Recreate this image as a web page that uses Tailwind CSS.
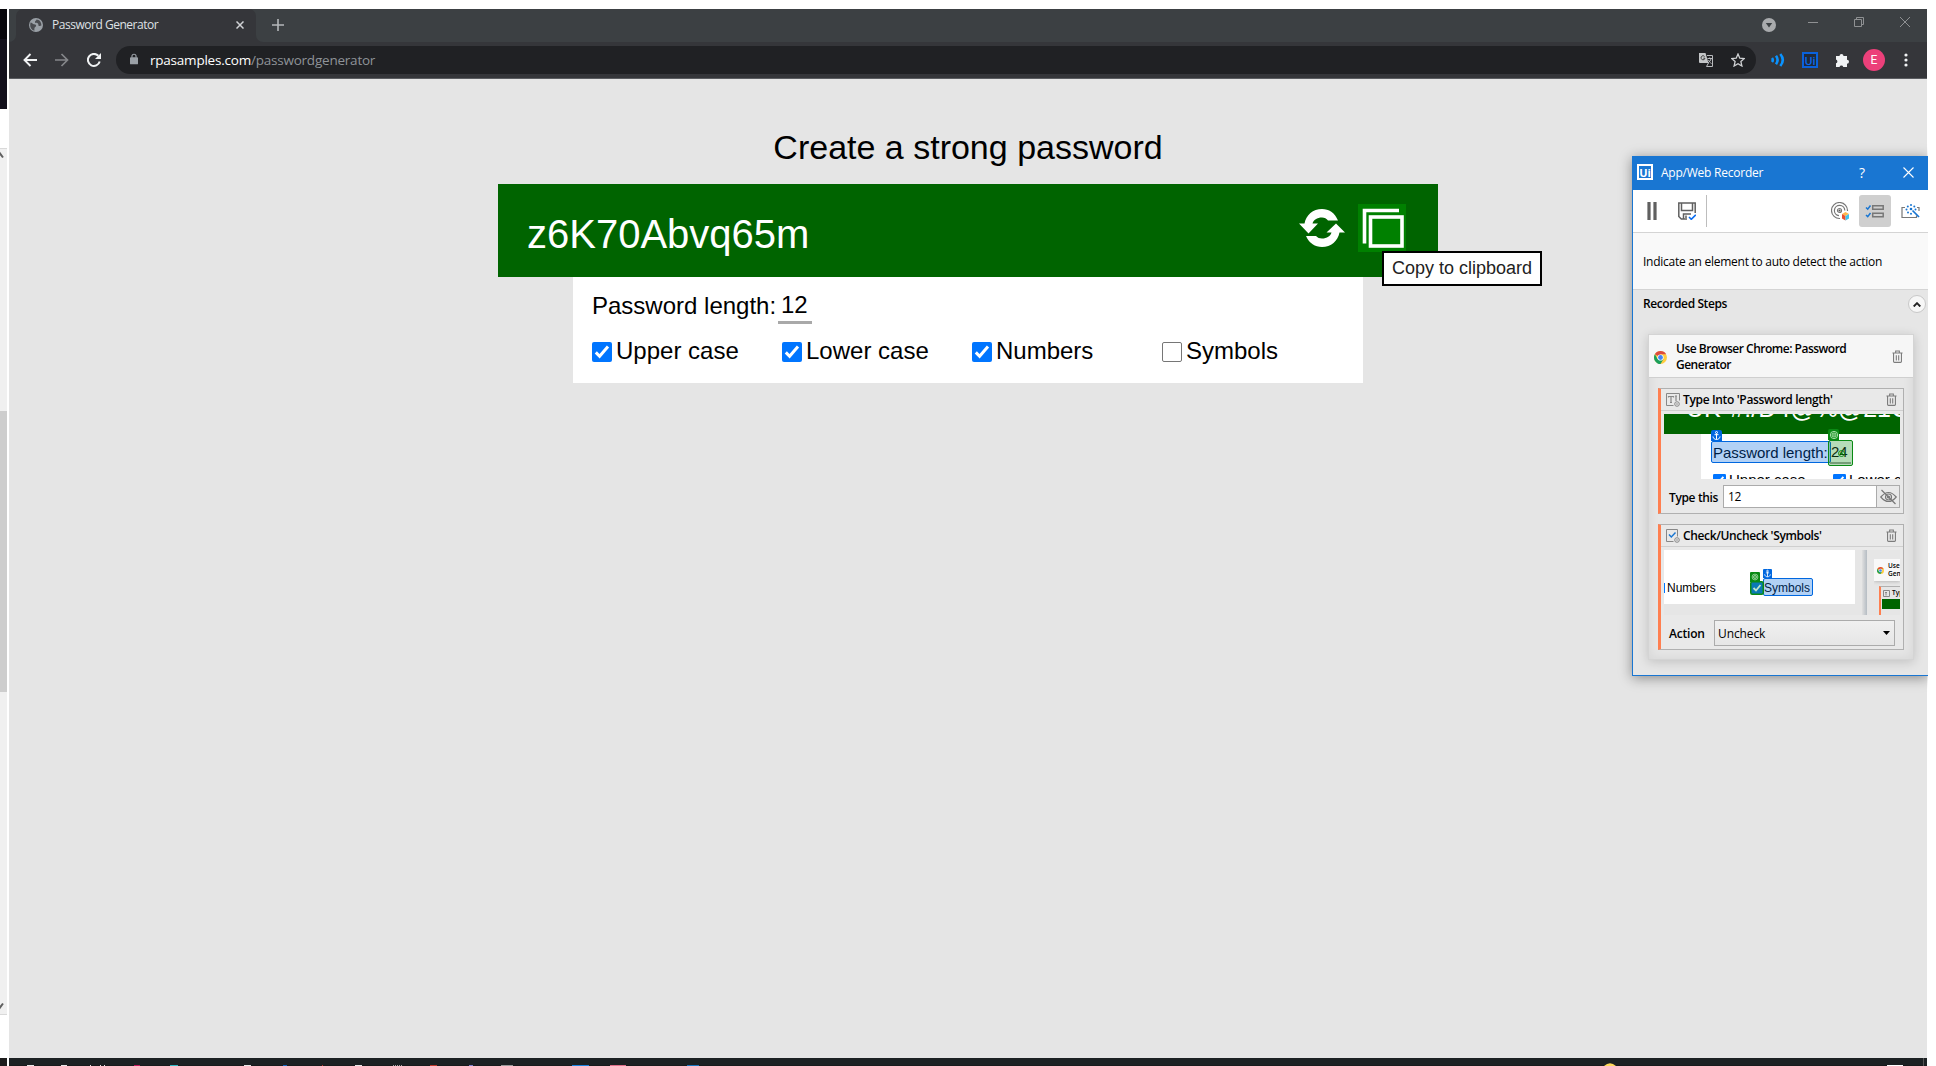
<!DOCTYPE html>
<html lang="en">
<head>
<meta charset="utf-8">
<title>Password Generator</title>
<script src="https://cdn.jsdelivr.net/npm/@tailwindcss/browser@4"></script>
</head>
<body class="relative flex h-[1066px] w-[1936px] flex-col overflow-hidden bg-white pt-[9px] font-['Open_Sans',sans-serif]">

<svg class="hidden">
  <symbol id="trash" viewBox="0 0 12 14"><g fill="none" stroke="#7c7c7c" stroke-width="1.2"><path d="M.5 3.2h11M4 3V1h4v2M1.7 3.2v9.2a1 1 0 0 0 1 1h6.6a1 1 0 0 0 1-1V3.2M4.7 5.5v5.8M7.3 5.5v5.8"/></g></symbol>
  <symbol id="check" viewBox="0 0 20 20"><rect width="20" height="20" rx="2" fill="#0075ff"/><path d="M3.8 10.4 7.6 14.2 16 4.4" fill="none" stroke="#fff" stroke-width="3"/></symbol>
  <symbol id="chrome" viewBox="0 0 20 20"><circle cx="10" cy="10" r="10" fill="#ffcd40"/><path d="M10 10 1.34 5A10 10 0 0 1 18.66 5H10Z" fill="#dd4b3e"/><path d="M1.34 5A10 10 0 0 0 10 20l4.4-7.5L10 10 5.7 12.5Z" fill="#1a9f5a"/><circle cx="10" cy="10" r="4.8" fill="#fff"/><circle cx="10" cy="10" r="3.7" fill="#4285f4"/></symbol>
  <symbol id="anchor" viewBox="0 0 11 11"><g fill="none" stroke="#fff" stroke-width="1"><circle cx="5.5" cy="2.5" r="1"/><path d="M5.5 3.5v6M3.5 4.7h4M2 6.5c.3 2 1.700 3 3.500 3s3.200-1 3.500-3"/></g></symbol>
  <symbol id="target" viewBox="0 0 11 11"><g fill="none" stroke="#c9f0c9" stroke-width=".9"><circle cx="5.500" cy="5.500" r="4"/><circle cx="5.500" cy="5.500" r="2.200"/><circle cx="5.500" cy="5.500" r=".5"/></g></symbol>
</svg>

<div class="flex h-[1049px] gap-[2px]">
  <!-- window behind -->
  <div class="flex w-[7px] flex-col overflow-hidden">
    <div class="h-[30px] bg-[#07060b]"></div>
    <div class="h-[70px] bg-[#12101b]"></div>
    <div class="h-[39px] bg-white"></div>
    <div class="h-[263px] border-t border-[#d9d9d9] bg-[#f0f0f0]"><svg class="mt-[2px] h-[8px] w-[7px]" viewBox="0 0 7 8"><path d="M-3 6.500 0 2.500 3 6.500" fill="none" stroke="#606060" stroke-width="2"/></svg></div>
    <div class="h-[281px] bg-[#cdcdcd]"></div>
    <div class="flex h-[323px] flex-col justify-end border-b border-[#d9d9d9] bg-[#f0f0f0] pb-[4px]"><svg class="h-[8px] w-[7px]" viewBox="0 0 7 8"><path d="M-3 1.500 0 5.500 3 1.500" fill="none" stroke="#606060" stroke-width="2"/></svg></div>
  </div>

  <!-- browser -->
  <div class="flex w-[1918px] flex-col bg-[#e5e5e5]">
    <div class="flex h-[33px] bg-[#3c4043]">
      <div class="w-[7px] bg-[#35363a]"><div class="h-full rounded-br-[7px] bg-[#3c4043]"></div></div>
      <div class="flex w-[240px] items-center rounded-t-[7px] bg-[#35363a] pl-[13px] pr-[12px]">
        <svg class="mt-[-1px] size-[14px]" viewBox="0 0 14 14"><circle cx="7" cy="7" r="7" fill="#9aa0a6"/><path d="M1.500 4.500c1.500 0 2 1.500 3.500 1.800 1.500.2 2.500.7 2 2-.5 1-1.600 1-1.600 2.500v2C2.600 12 1 9.500 1.200 7ZM7.500 1.500c0 1.500-1.700 1.200-1.500 2.500.3 1.300 2 .5 3 1.500.8 1-.2 2 1 2.500.9.300 1.500 0 2.400-.4C12.500 4 10.500 1.800 7.500 1.500Z" fill="#4a4c50"/></svg>
        <span class="ml-[9px] mt-[-1px] flex-1 whitespace-nowrap text-[12px] tracking-[-0.48px] text-[#dfe1e5]">Password Generator</span>
        <svg class="mt-[-1px] size-[8px]" viewBox="0 0 8 8"><path d="m.5.5 7 7m0-7-7 7" stroke="#d0d2d5" stroke-width="1.500"/></svg>
      </div>
      <div class="w-[7px] bg-[#35363a]"><div class="h-full rounded-bl-[7px] bg-[#3c4043]"></div></div>
      <svg class="ml-[9px] mt-[10px] size-[12px]" viewBox="0 0 12 12"><path d="M6 0v12M0 6h12" stroke="#b4b7ba" stroke-width="1.600"/></svg>
      <div class="flex-1"></div>
      <svg class="mt-[9px] size-[14px]" viewBox="0 0 14 14"><circle cx="7" cy="7" r="7" fill="#a9abad"/><path d="M3.800 5h6.400L7 9.600Z" fill="#3c4043"/></svg>
      <svg class="ml-[32px] mt-[8px] size-[10px]" viewBox="0 0 10 10"><path d="M0 5.500h10" stroke="#8f9193"/></svg>
      <svg class="ml-[36px] mt-[8px] size-[10px]" viewBox="0 0 10 10"><path d="M.5 2.500h7v7h-7ZM2.500 2.500v-2h7v7h-2" fill="none" stroke="#8f9193"/></svg>
      <svg class="ml-[36px] mr-[17px] mt-[8px] size-[10px]" viewBox="0 0 10 10"><path d="m0 0 10 10M10 0 0 10" stroke="#8f9193"/></svg>
    </div>

    <div class="flex h-[37px] items-center border-b border-[#5b5d61] bg-[#35363a]">
      <svg class="ml-[14px] size-[14px]" viewBox="0 0 14 14"><path d="M14 7H1.500M7.500 1 1.500 7l6 6" fill="none" stroke="#f1f3f4" stroke-width="1.900"/></svg>
      <svg class="ml-[18px] size-[14px]" viewBox="0 0 14 14"><path d="M0 7h12.500M6.500 1l6 6-6 6" fill="none" stroke="#85878a" stroke-width="1.700"/></svg>
      <svg class="ml-[18px] size-[14px]" viewBox="0 0 14 14"><path d="M12.700 8.500A6 6 0 1 1 11.300 2.800" fill="none" stroke="#f1f3f4" stroke-width="2"/><path d="M14 0v6H8Z" fill="#f1f3f4"/></svg>
      <div class="ml-[15px] flex h-[28px] w-[1640px] items-center rounded-full bg-[#202124] pl-[14px] pr-[11px]">
        <svg class="mt-[-2px] h-[12px] w-[8px]" viewBox="0 0 9 12"><rect y="4" width="9" height="8" rx="1" fill="#9aa0a6"/><path d="M2.200 4.500V3a2.300 2.300 0 0 1 4.600 0v1.500" fill="none" stroke="#9aa0a6" stroke-width="1.300"/></svg>
        <span class="ml-[12px] flex-1 whitespace-nowrap text-[13.500px] tracking-[-0.22px] text-[#8f9398]"><span class="text-white">rpasamples.com</span>/passwordgenerator</span>
        <svg class="size-[14px]" viewBox="0 0 14 14"><path d="M0 0h6.500l3 10H1a1 1 0 0 1-1-1Z" fill="#c4c6c8"/><path d="M5.600 3.500A2 2 0 1 0 6 5.200H4.300" fill="none" stroke="#333" stroke-width=".9"/><path d="M8 2.500h5.500v11H7.500L9.500 10M8.500 5.500H13M10.700 4.500v1M12 5.500c-.3 2-1.500 3.500-3 4.500M9.500 7c.6 1.500 1.500 2.500 3 3.500" fill="none" stroke="#b9bbbe" stroke-width="1"/></svg>
        <svg class="ml-[18px] size-[14px]" viewBox="0 0 14 14"><path d="m7 1 1.800 4.200 4.500.4-3.400 3 1 4.400L7 10.700 3.100 13l1-4.400-3.400-3 4.500-.4Z" fill="none" stroke="#d0d2d4" stroke-width="1.300"/></svg>
      </div>
      <svg class="ml-[15px] size-[14px]" viewBox="0 0 14 14"><g fill="none" stroke="#0a93ff" stroke-width="2.600"><path d="M1 5q1.600 2 0 4M5 2.800q3.200 4.200 0 8.400M9.300 1q5 6 0 12"/></g></svg>
      <div class="ml-[17px] flex size-[16px] items-center justify-center border-2 border-[#0a62dc] bg-[#202a3a] text-[11px] font-semibold leading-none text-[#0a6cf0]">Ui</div>
      <svg class="ml-[16px] size-[16px]" viewBox="0 0 16 16"><path d="M2 4h3.500a2 2 0 1 1 4 0H13v3.700a2 2 0 1 1 0 4V15H9.300a2 2 0 0 0-3.800 0H2v-3.700a2 2 0 0 0 0-3.800Z" fill="#f1f3f4"/></svg>
      <div class="ml-[13px] flex size-[22px] items-center justify-center rounded-full bg-[#ec407a] font-[Roboto] text-[12px] text-white">E</div>
      <svg class="ml-[19px] h-[14px] w-[4px]" viewBox="0 0 4 14"><g fill="#f1f3f4"><circle cx="2" cy="2" r="1.600"/><circle cx="2" cy="7" r="1.600"/><circle cx="2" cy="12" r="1.600"/></g></svg>
    </div>

    <!-- page -->
    <main class="flex flex-1 flex-col items-center font-['Liberation_Sans',Arial,sans-serif] text-black">
      <h1 class="mt-[49px] h-[56px] text-[34px] leading-[39px]">Create a strong password</h1>
      <div class="flex h-[93px] w-[940px] bg-[#006400] pl-[29px] pr-[32px]">
        <span class="mt-[27px] flex-1 text-[40px] leading-[46px] text-white">z6K70Abvq65m</span>
        <svg class="mt-[25px] h-[38px] w-[46px]" viewBox="0 0 46 38"><g fill="#fff"><path d="M0 14.500h5.500C7 6 14 0 23 0c7 0 12.500 3.500 16 11.500H29c-1.500-2-3.500-3-6-3-5 0-8.500 2.500-9.500 6H19L9.500 24.500Z"/><path d="M46 23.500h-5.500C39 32 32 38 23 38 16 38 10.500 34.500 7 27h10c1.500 1.700 3.500 2.500 6 2.500 5 0 8.500-2.500 9.500-6H27.500L37 14.500Z"/></g></svg>
        <div class="relative ml-[13px] mt-[20px] size-[48px] bg-[#008000]">
          <svg class="size-[48px]" viewBox="0 0 48 48"><path d="M6.500 39.500v-33H41" fill="none" stroke="#fff" stroke-width="3.600"/><rect x="12.500" y="13" width="31.500" height="29" fill="none" stroke="#fff" stroke-width="3.600"/></svg>
          <div class="absolute left-[24px] top-[47px] flex h-[35px] w-[160px] items-center justify-center whitespace-nowrap border-2 border-black bg-white pb-[1px] text-[18px] text-[#222]">Copy to clipboard</div>
        </div>
      </div>
      <div class="flex h-[106px] w-[790px] flex-col bg-white pl-[19px]">
        <div class="flex h-[47px] pt-[14px] text-[24px] leading-[27px]">
          <span class="w-[186px] pt-[1px]">Password length:</span>
          <div class="h-[33px] w-[34px] border-b-[3px] border-[#a9a9a9] pl-[3px]">12</div>
        </div>
        <div class="grid grid-cols-[190px_190px_190px_190px] pt-[13px] text-[24px] leading-[27px]">
          <label class="flex gap-[4px]"><svg class="mt-[5px] size-[20px]"><use href="#check"/></svg>Upper case</label>
          <label class="flex gap-[4px]"><svg class="mt-[5px] size-[20px]"><use href="#check"/></svg>Lower case</label>
          <label class="flex gap-[4px]"><svg class="mt-[5px] size-[20px]"><use href="#check"/></svg>Numbers</label>
          <label class="flex gap-[4px]"><span class="mt-[5px] size-[20px] rounded-[2px] border border-[#767676] bg-white"></span>Symbols</label>
        </div>
      </div>
    </main>
  </div>
</div>

<!-- taskbar sliver -->
<div class="flex h-[8px] gap-[2px]">
  <div class="w-[7px] bg-[#1d1d1d]"></div>
  <div class="w-[1918px] bg-[#1c2123]">
    <svg class="h-[8px] w-[1918px]" viewBox="9 0 1918 8"><path d="M9 7.500H1927" stroke="#181b1c"/><g stroke-width="1"><path d="M27 7.500h7M61 7.500h6M90 7.500h1M100 7.500h1M104 7.500h1M244 7.500h7M355 7.500h7" stroke="#e8e8e8"/><path d="M134 7.500h6" stroke="#c2185b"/><path d="M170 7.500h8" stroke="#30b8c4"/><path d="M283 7.500h4" stroke="#1565c0"/><path d="M322 7.500h1M430 7.500h7" stroke="#c0392b"/><path d="M393 7.500h10" stroke="#aaa" stroke-dasharray="1 1"/><path d="M469 7.500h4" stroke="#8080d0"/><path d="M501 7.500h12" stroke="#999"/><path d="M572 7.500h17" stroke="#1a82e0"/><path d="M610 7.500h16" stroke="#e0708a"/><path d="M687 7.500h12" stroke="#1976c0"/></g><path d="M1604 8q6-5.500 12 0Z" fill="#ffd95a"/><path d="M1887 7.500h16" stroke="#fff"/><path d="M1923.500 0v8" stroke="#555"/></svg>
  </div>
</div>

<!-- recorder window floating over the browser -->
<div class="absolute left-[1632px] top-[156px] h-[520px] w-[296px] shadow-[0_2px_12px_rgba(0,0,0,0.4)] [clip-path:inset(-20px_0_-20px_-20px)]">
<div class="flex h-full w-full flex-col overflow-hidden border-b border-l border-[#1976d2] bg-[#e6e6e6] text-[12px] text-black">
  <div class="flex h-[34px] shrink-0 items-center bg-[#1976d2] pl-[4px] pr-[14px] text-white">
    <div class="mt-[-2px] flex size-[16px] items-center justify-center border-2 border-white text-[11px] font-bold leading-none">Ui</div>
    <span class="ml-[8px] mt-[-1px] flex-1 whitespace-nowrap tracking-[-0.23px]">App/Web Recorder</span>
    <span class="mr-[38px] mt-[-2px] text-[14px]">?</span>
    <svg class="mt-[-2px] size-[11px]" viewBox="0 0 11 11"><path d="m.5.5 10 10m0-10-10 10" stroke="#fff" stroke-width="1.100"/></svg>
  </div>
  <div class="flex h-[43px] shrink-0 items-center border-b border-[#d4d4d4] bg-white">
    <svg class="ml-[14px] h-[18px] w-[10px]" viewBox="0 0 10 18"><path d="M2 0v18M8 0v18" stroke="#606060" stroke-width="3.200"/></svg>
    <svg class="ml-[21px] size-[18px]" viewBox="0 0 18 18"><g fill="none" stroke="#606060" stroke-width="1.500"><path d="M17.200 11V1H.8v13.500l2.500 2.500H9M3.500 1v7.500h11V1M5.500 17v-5H13M8 13.500V16"/></g><path d="m11 15 2.300 2.300 4.500-4.600" fill="none" stroke="#0a6cf0" stroke-width="1.600"/></svg>
    <div class="ml-[10px] h-[32px] w-px bg-[#bdbdbd]"></div>
    <div class="flex-1"></div>
    <svg class="size-[19px]" viewBox="0 0 19 19"><g fill="none" stroke="#777" stroke-width="1.200"><path d="M16.500 9A8 8 0 1 0 9 16.500M13.800 8.500A5.200 5.200 0 1 0 8 13.700"/><circle cx="8.500" cy="8.500" r="2"/></g><circle cx="8.500" cy="8.500" r="1" fill="#555"/><path d="m11 12 3.500-2 3.500 2-3.500 2Z" fill="#ffb74d"/><path d="m11 12 3.500 2v4.500L11 16.500Z" fill="#e8502f"/><path d="m18 12-3.500 2v4.500l3.500-2Z" fill="#3fc3ee"/></svg>
    <div class="ml-[9px] flex size-[32px] items-center justify-center rounded-[3px] bg-[#cfcfcf]"><svg class="h-[14px] w-[20px]" viewBox="0 0 20 14"><g fill="none" stroke="#777" stroke-width="1.500"><path d="M7.700 1.700h10.500v3.600H7.700ZM7.700 9.200h10.500v3.600H7.700Z"/></g><path d="m1 3.500 1.700 1.600L5.500 1.500M1 11l1.700 1.600L5.500 9" fill="none" stroke="#1976d2" stroke-width="1.500"/></svg></div>
    <svg class="ml-[10px] mr-[8px] h-[15px] w-[19px]" viewBox="0 0 19 15"><path d="M4 3.500H1v10h14.500v-2M18 7V3.500h-2" fill="none" stroke="#777" stroke-width="1.200"/><path d="m11.500 6.500 6.500 6.500" stroke="#1976d2" stroke-width="1.700"/><g fill="#1976d2"><circle cx="10" cy="1" r="1"/><circle cx="6.800" cy="2.500" r="1"/><circle cx="13.300" cy="2.500" r="1"/><circle cx="5.500" cy="5.500" r="1"/><circle cx="14.500" cy="5.500" r="1"/><circle cx="7" cy="8.500" r="1"/><circle cx="10" cy="9.700" r="1"/><circle cx="10" cy="5" r="1.300"/></g></svg>
  </div>
  <div class="flex h-[57px] shrink-0 items-center border-b border-[#d4d4d4] bg-[#f9f9f9] pl-[10px]"><span class="mt-[2px] whitespace-nowrap tracking-[-0.27px]">Indicate an element to auto detect the action</span></div>
  <div class="flex h-[44px] shrink-0 items-start justify-between pl-[10px] pr-[2px] pt-[5px]">
    <span class="font-semibold tracking-[-0.4px]">Recorded Steps</span>
    <div class="flex size-[18px] items-center justify-center rounded-full border border-[#c8c8c8] bg-[#f7f7f7]"><svg class="h-[5px] w-[8px]" viewBox="0 0 8 5"><path d="m.7 4.500 3.300-3.300 3.300 3.300" fill="none" stroke="#222" stroke-width="1.900"/></svg></div>
  </div>

  <div class="ml-[15px] flex h-[326px] w-[266px] shrink-0 flex-col border border-[#d4d4d4] bg-[#e6e6e6] shadow-[0_2px_10px_rgba(0,0,0,0.16),inset_0_0_12px_rgba(0,0,0,0.08)]">
    <div class="flex h-[43px] shrink-0 items-center border-b border-[#cfcfcf] bg-[#f6f6f6] pl-[5px] pr-[10px]">
      <svg class="mt-[2px] size-[13px]"><use href="#chrome"/></svg>
      <span class="ml-[9px] mt-[2px] flex-1 whitespace-nowrap font-semibold leading-[16px] tracking-[-0.5px]">Use Browser Chrome: Password<br>Generator</span>
      <svg class="h-[13px] w-[11px]"><use href="#trash"/></svg>
    </div>

    <div class="ml-[9px] mt-[10px] flex h-[126px] w-[246px] shrink-0 flex-col border border-l-[3px] border-[#b0b0b0] border-l-[#ff7f50] bg-[#e9e9e9]">
      <div class="flex h-[22px] shrink-0 items-center border-b border-[#cfcfcf] pl-[5px] pr-[6px]">
        <svg class="size-[14px]" viewBox="0 0 14 14"><g fill="none" stroke="#888"><path d="M7.500 12.500h-7V.5h13v7"/><path d="M2.500 4.500v-1h5v1M5 3.500v6M4 9.500h2M9 3h2M10 3v5" stroke-width="1.200"/><circle cx="11" cy="11" r="2.300"/></g><circle cx="11" cy="11" r=".8" fill="#888"/></svg>
        <span class="ml-[3px] flex-1 whitespace-nowrap font-semibold tracking-[-0.34px]">Type Into 'Password length'</span>
        <svg class="h-[13px] w-[11px]"><use href="#trash"/></svg>
      </div>
      <div class="relative ml-[3px] mt-[3px] flex h-[65px] w-[236px] shrink-0 flex-col overflow-hidden font-['Liberation_Sans',Arial,sans-serif]">
        <div class="h-[20px] shrink-0 overflow-hidden bg-[#006400] pl-[22px]"><div class="mt-[-19px] whitespace-nowrap text-[25px] leading-[26px] text-white">UK*#!/D4@%@21C</div></div>
        <div class="ml-[37px] flex-1 bg-white pl-[12px] pt-[9px]"><span class="whitespace-nowrap text-[15px] leading-[19px] tracking-[-0.03px]">Password length:</span>
          <div class="mt-[9px] flex gap-[3px] whitespace-nowrap text-[15px] leading-[15px]"><svg class="mt-[2px] size-[13px] shrink-0"><use href="#check"/></svg><span class="w-[101px] shrink-0">Upper case</span><svg class="mt-[2px] size-[13px] shrink-0"><use href="#check"/></svg>Lower case</div>
        </div>
        <div class="absolute left-[47px] top-[27px] h-[22px] w-[120px] rounded-[2px] border border-[#0067df] bg-[#0067df]/30"></div>
        <div class="absolute left-[47px] top-[16px] flex size-[11px] items-center justify-center rounded-t-[2px] bg-[#0067df]"><svg class="size-[11px]"><use href="#anchor"/></svg></div>
        <div class="absolute left-[164px] top-[26px] flex h-[26px] w-[25px] rounded-[2px] border border-[#0a8a14] bg-[#0a8a14]/30 pl-[2px] pt-[1px] text-[15px] leading-[20px] text-[#0d2e0f]"><span>24</span><svg class="absolute left-[8px] top-[8px] size-[9px]" viewBox="0 0 9 9"><circle cx="4.500" cy="4.500" r="3" fill="none" stroke="#0a8a14"/><circle cx="4.500" cy="4.500" r="1.200" fill="#0a8a14"/></svg><span class="absolute bottom-[1px] left-[1px] h-[2px] w-[21px] bg-[#769c78]"></span></div>
        <div class="absolute left-[164px] top-[15px] flex size-[11px] items-center justify-center rounded-t-[2px] bg-[#0a8a14]"><svg class="size-[10px]"><use href="#target"/></svg></div>
      </div>
      <div class="ml-[8px] mt-[6px] flex h-[23px] items-center">
        <span class="mt-[2px] w-[54px] whitespace-nowrap font-semibold tracking-[-0.36px]">Type this</span>
        <div class="flex h-[23px] w-[154px] items-center border border-[#ababab] bg-white pl-[4px] tracking-[-0.4px]">12</div>
        <div class="flex h-[23px] w-[23px] items-center justify-center border border-l-0 border-[#ababab]"><svg class="h-[16px] w-[17px]" viewBox="0 0 17 16"><g fill="none" stroke="#777" stroke-width="1.200"><path d="M.8 8Q8.500-1 16.200 8 8.500 17 .8 8ZM1.500 1l14 14"/><circle cx="8.500" cy="8" r="3"/><circle cx="8.500" cy="8" r="1"/></g></svg></div>
      </div>
    </div>

    <div class="ml-[9px] mt-[10px] flex h-[126px] w-[246px] shrink-0 flex-col border border-l-[3px] border-[#b0b0b0] border-l-[#ff7f50] bg-[#e9e9e9]">
      <div class="flex h-[22px] shrink-0 items-center border-b border-[#cfcfcf] pl-[5px] pr-[6px]">
        <svg class="size-[14px]" viewBox="0 0 14 14"><g fill="none" stroke="#888"><path d="M7.500 12.500h-7V.5h11v7"/><circle cx="11" cy="11" r="2.300"/></g><circle cx="11" cy="11" r=".8" fill="#888"/><path d="M3 5.500 5.300 8 9.500 3.500" fill="none" stroke="#1976d2" stroke-width="1.400"/></svg>
        <span class="ml-[3px] flex-1 whitespace-nowrap font-semibold tracking-[-0.36px]">Check/Uncheck 'Symbols'</span>
        <svg class="h-[13px] w-[11px]"><use href="#trash"/></svg>
      </div>
      <div class="relative ml-[3px] mt-[3px] flex h-[65px] w-[236px] shrink-0 overflow-hidden bg-[#e6e6e6] font-['Liberation_Sans',Arial,sans-serif]">
        <div class="flex h-[54px] w-[191px] shrink-0 items-end bg-white pb-[9px] text-[12px] leading-[14px]"><span class="mb-[2px] h-[10px] w-px bg-[#0075ff]"></span><span class="ml-[2px] w-[97px]">Numbers</span><span>Symbols</span></div>
        <div class="ml-[7px] w-[5px] shrink-0 bg-linear-to-r from-[#e0e0e0] to-[#b5bcc3]"></div>
        <div class="ml-[7px] mt-[9px] flex w-[26px] shrink-0 flex-col overflow-hidden font-['Open_Sans',sans-serif]">
          <div class="flex h-[22px] shrink-0 items-center gap-[4px] bg-[#f8f8f8] pl-[3px] shadow-[0_0_4px_rgba(0,0,0,0.3)]"><svg class="size-[7px] shrink-0"><use href="#chrome"/></svg><span class="whitespace-nowrap text-[6.500px] font-semibold leading-[8px]">Use<br>Gen</span></div>
          <div class="ml-[5px] mt-[5px] flex h-[30px] shrink-0 flex-col border-l-2 border-t border-[#b0b0b0] border-l-[#ff7f50]"><div class="flex h-[12px] shrink-0 items-center gap-[2px] pl-[2px] text-[6.500px] font-semibold"><svg class="size-[7px] shrink-0" viewBox="0 0 7 7"><path d="M.5.5h6v6h-6ZM2 2.500h2M3 2.500v3" fill="none" stroke="#888"/></svg>Typ</div><div class="ml-[1px] h-[10px] bg-[#006400]"></div></div>
        </div>
        <div class="absolute left-[99px] top-[28px] h-[18px] w-[50px] rounded-[2px] border border-[#0067df] bg-[#0067df]/30"></div>
        <div class="absolute left-[99px] top-[19px] flex size-[9px] items-center justify-center rounded-t-[1px] bg-[#0067df]"><svg class="size-[9px]"><use href="#anchor"/></svg></div>
        <div class="absolute left-[86px] top-[22px] flex size-[10px] items-center justify-center rounded-t-[1px] bg-[#0a8a14]"><svg class="size-[8px]"><use href="#target"/></svg></div>
        <svg class="absolute left-[86px] top-[31px] size-[14px]" viewBox="0 0 14 14"><rect x=".75" y=".75" width="12.500" height="12.500" rx="1.500" fill="#0a79b5" stroke="#0a8a14" stroke-width="1.500"/><path d="m3.500 7 2.500 2.500 4.500-5.500" fill="none" stroke="#bfe6c8" stroke-width="1.800"/></svg>
      </div>
      <div class="ml-[8px] mt-[5px] flex h-[26px] items-center">
        <span class="mt-[2px] w-[45px] font-semibold tracking-[-0.2px]">Action</span>
        <div class="flex h-[26px] w-[181px] items-center justify-between border border-[#ababab] bg-linear-to-b from-[#f0f0f0] to-[#e6e6e6] pl-[3px] pr-[4px]"><span class="mt-[2px] tracking-[-0.1px]">Uncheck</span><svg class="h-[4px] w-[7px]" viewBox="0 0 7 4"><path d="M0 0h7L3.500 4Z"/></svg></div>
      </div>
    </div>
  </div>
</div>
</div>
</body>
</html>
